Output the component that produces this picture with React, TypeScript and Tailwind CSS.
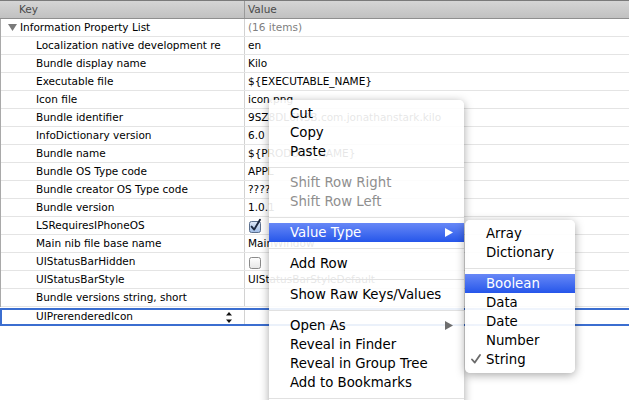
import React from 'react';

type Row = { k: string; v?: string; check?: boolean };

const rows: Row[] = [
  { k: 'Localization native development re', v: 'en' },
  { k: 'Bundle display name', v: 'Kilo' },
  { k: 'Executable file', v: '${EXECUTABLE_NAME}' },
  { k: 'Icon file', v: 'icon.png' },
  { k: 'Bundle identifier', v: '9SZ8DL6N3B.com.jonathanstark.kilo' },
  { k: 'InfoDictionary version', v: '6.0' },
  { k: 'Bundle name', v: '${PRODUCT_NAME}' },
  { k: 'Bundle OS Type code', v: 'APPL' },
  { k: 'Bundle creator OS Type code', v: '????' },
  { k: 'Bundle version', v: '1.0.1' },
  { k: 'LSRequiresIPhoneOS', check: true },
  { k: 'Main nib file base name', v: 'MainWindow' },
  { k: 'UIStatusBarHidden', check: false },
  { k: 'UIStatusBarStyle', v: 'UIStatusBarStyleDefault' },
  { k: 'Bundle versions string, short', v: '' },
];

function Checkbox({ checked }: { checked: boolean }) {
  return (
    <svg width="14" height="14" viewBox="0 0 14 14" className="overflow-visible">
      <defs>
        <linearGradient id="cbOn" x1="0" y1="0" x2="0" y2="1">
          <stop offset="0" stopColor="#dfe9f8" />
          <stop offset="1" stopColor="#9fbce6" />
        </linearGradient>
        <linearGradient id="cbOff" x1="0" y1="0" x2="0" y2="1">
          <stop offset="0" stopColor="#ffffff" />
          <stop offset="1" stopColor="#e6e6e6" />
        </linearGradient>
      </defs>
      <rect x="1.5" y="2.5" width="11" height="11" rx="2" fill={checked ? 'url(#cbOn)' : 'url(#cbOff)'} stroke={checked ? '#5b6f8e' : '#8a8a8a'} />
      {checked && <path d="M3.6 7.6 L6.2 10.6 L12 0.8" fill="none" stroke="#1c2840" strokeWidth="1.9" strokeLinecap="round" strokeLinejoin="round" />}
    </svg>
  );
}

function Arrow({ color }: { color: string }) {
  return (
    <svg width="8" height="9" viewBox="0 0 8 9">
      <path d="M0 0 L8 4.5 L0 9 Z" fill={color} />
    </svg>
  );
}

function Item({ label, disabled, active, arrow, checked }: { label: string; disabled?: boolean; active?: boolean; arrow?: boolean; checked?: boolean }) {
  return (
    <div
      className={`relative h-[19px] flex items-center pl-[21px] pr-[11px] whitespace-nowrap ${
        active ? 'bg-linear-to-b from-[#6787f6] to-[#2555ea] text-white' : disabled ? 'text-[#8f8f8f]' : 'text-black'
      }`}
    >
      {checked && (
        <svg width="10" height="10" viewBox="0 0 10 10" className="absolute left-[6px] top-[4px]">
          <path d="M1 5.5 L3.8 8.6 L9 1" fill="none" stroke="#6a6a6a" strokeWidth="1.8" strokeLinecap="round" strokeLinejoin="round" />
        </svg>
      )}
      <span className="flex-1">{label}</span>
      {arrow && <Arrow color={active ? '#ffffff' : '#6e6e6e'} />}
    </div>
  );
}

function Sep() {
  return (
    <div className="h-[12px] flex items-center">
      <div className="h-px w-full bg-[#e1e1e1]" />
    </div>
  );
}

export default function App() {
  return (
    <div className="relative w-[629px] h-[400px] overflow-hidden bg-white font-['DejaVu_Sans',sans-serif] text-[10.5px] text-black">
      {/* header */}
      <div className="flex h-[19px] border-t border-[#7a7a7a] border-b border-b-[#8f8f8f] bg-linear-to-b from-[#d5d5d5] to-[#c1c1c1] text-[#4a4a4a]">
        <div className="w-[245px] shrink-0 pl-[19px] flex items-center border-r border-[#9a9a9a]">Key</div>
        <div className="flex-1 pl-[3px] flex items-center">Value</div>
      </div>
      {/* body */}
      <div className="border-l border-[#a9a9a9]">
        <div className="flex h-[18px] border-b border-[#e4e4e4]">
          <div className="w-[244px] shrink-0 flex items-center pl-[7px] border-r border-[#d2d2d2]">
            <svg width="9" height="7" viewBox="0 0 9 7" className="mr-[3px]">
              <path d="M0 0 L9 0 L4.5 7 Z" fill="#7a7a7a" />
            </svg>
            <span>Information Property List</span>
          </div>
          <div className="flex-1 pl-[3px] flex items-center text-[#808080]">(16 items)</div>
        </div>
        {rows.map((r) => (
          <div key={r.k} className="flex h-[18px] border-b border-[#e4e4e4]">
            <div className="w-[244px] shrink-0 flex items-center pl-[35px] border-r border-[#d2d2d2] whitespace-nowrap overflow-hidden">{r.k}</div>
            <div className="flex-1 pl-[3px] flex items-center whitespace-nowrap">
              {r.check !== undefined ? <Checkbox checked={r.check} /> : r.v}
            </div>
          </div>
        ))}
      </div>
      {/* edited row */}
      <div className="flex h-[18px] w-[640px] border-2 border-[#3b6ed0] mt-px">
        <div className="w-[243px] shrink-0 flex items-center pl-[34px] border-r border-[#d2d2d2] relative">
          <span className="flex-1">UIPrerenderedIcon</span>
          <svg width="6" height="11" viewBox="0 0 6 11" className="mr-[12px]">
            <path d="M3 0 L6 3.5 L0 3.5 Z" fill="#111" />
            <path d="M0 7.5 L6 7.5 L3 11 Z" fill="#111" />
          </svg>
        </div>
        <div className="flex-1" />
      </div>

      {/* context menu */}
      <div className="absolute left-[269px] top-[100px] w-[195px] pt-[4px] pb-[40px] rounded-t-[5px] bg-white/[0.9] shadow-[0_2px_10px_rgba(0,0,0,0.35)] text-[13.3px]">
        <Item label="Cut" />
        <Item label="Copy" />
        <Item label="Paste" />
        <Sep />
        <Item label="Shift Row Right" disabled />
        <Item label="Shift Row Left" disabled />
        <Sep />
        <Item label="Value Type" active arrow />
        <Sep />
        <Item label="Add Row" />
        <Sep />
        <Item label="Show Raw Keys/Values" />
        <Sep />
        <Item label="Open As" arrow />
        <Item label="Reveal in Finder" />
        <Item label="Reveal in Group Tree" />
        <Item label="Add to Bookmarks" />
        <Sep />
      </div>

      {/* submenu */}
      <div className="absolute left-[465px] top-[220px] w-[110px] py-[4px] rounded-[5px] bg-white/[0.92] shadow-[0_2px_10px_rgba(0,0,0,0.35)] text-[13.3px]">
        <Item label="Array" />
        <Item label="Dictionary" />
        <Sep />
        <Item label="Boolean" active />
        <Item label="Data" />
        <Item label="Date" />
        <Item label="Number" />
        <Item label="String" checked />
      </div>
    </div>
  );
}
